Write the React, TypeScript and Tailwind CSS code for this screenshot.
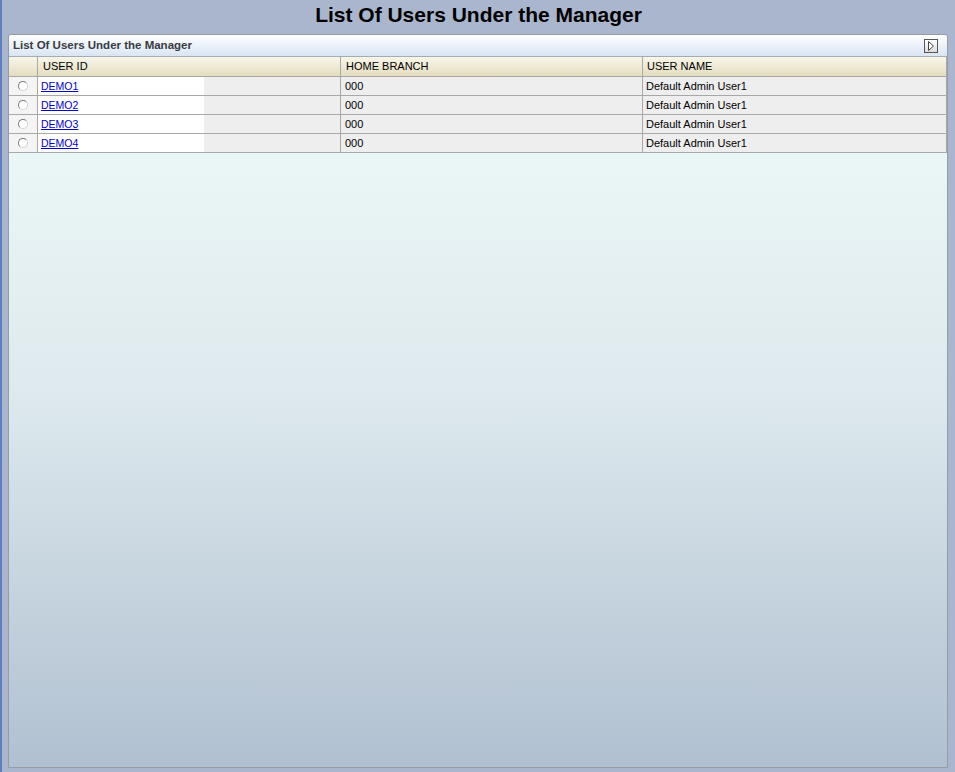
const rows = [
  { id: 'DEMO1', branch: '000', name: 'Default Admin User1' },
  { id: 'DEMO2', branch: '000', name: 'Default Admin User1' },
  { id: 'DEMO3', branch: '000', name: 'Default Admin User1' },
  { id: 'DEMO4', branch: '000', name: 'Default Admin User1' },
];

const font = 'font-["Tahoma","Liberation_Sans",sans-serif]';

function Radio() {
  return (
    <span className="block h-[10px] w-[10px] rounded-full border border-t-[#7a7a7a] border-l-[#7a7a7a] border-r-[#d0d0d0] border-b-[#d0d0d0] bg-white" />
  );
}

function ExpandIcon() {
  return (
    <button className="flex h-[14px] w-[14px] items-center justify-center border border-[#555] bg-gradient-to-b from-white to-[#dcdcdc]">
      <svg width="8" height="10" viewBox="0 0 8 10">
        <path d="M1.5 0.5 L6.5 5 L1.5 9.5 Z" fill="#fff" stroke="#444" strokeWidth="1" />
      </svg>
    </button>
  );
}

export default function App() {
  return (
    <div className={`flex h-[772px] flex-col border-l-2 border-[#5f7fc0] bg-[#a9b6cd] ${font}`}>
      <h1 className="h-[34px] pt-[1px] text-center text-[21px] font-bold leading-[28px] text-black">
        List Of Users Under the Manager
      </h1>

      <div className="mb-[4px] ml-[6px] mr-[7px] flex flex-1 flex-col overflow-hidden rounded-t-[3px] border border-[#959ca6]">
        {/* panel header */}
        <div className="flex h-[22px] items-center justify-between border-b border-[#a4abb3] bg-gradient-to-b from-white to-[#d9e5f3] pl-[4px] pr-[9px]">
          <span className="text-[11.5px] font-bold text-[#383c44]">List Of Users Under the Manager</span>
          <ExpandIcon />
        </div>

        {/* grid */}
        <div className="grid grid-cols-[29px_303px_302px_1fr] text-[11px] text-black">
          <div className="h-[20px] border-b border-r border-[#a8a8a8] bg-gradient-to-b from-[#f8f6ea] to-[#e4ddbf]" />
          <div className="h-[20px] border-b border-r border-[#a8a8a8] bg-gradient-to-b from-[#f8f6ea] to-[#e4ddbf] pl-[5px] leading-[19px]">
            USER ID
          </div>
          <div className="h-[20px] border-b border-r border-[#a8a8a8] bg-gradient-to-b from-[#f8f6ea] to-[#e4ddbf] pl-[5px] leading-[19px]">
            HOME BRANCH
          </div>
          <div className="h-[20px] border-b border-r border-[#a8a8a8] bg-gradient-to-b from-[#f8f6ea] to-[#e4ddbf] pl-[4px] leading-[19px]">
            USER NAME
          </div>

          {rows.map((r) => (
            <div key={r.id} className="contents">
              <div className="flex h-[19px] items-center border-b border-r border-[#a8a8a8] bg-[#f4f4f4] pl-[9px]">
                <Radio />
              </div>
              <div className="flex h-[19px] border-b border-r border-[#a8a8a8] bg-[#eeeeee]">
                <div className="w-[166px] bg-white pl-[3px] leading-[18px]">
                  <a href="#" className="text-[10.5px] text-[#0000cc] underline">
                    {r.id}
                  </a>
                </div>
              </div>
              <div className="h-[19px] border-b border-r border-[#a8a8a8] bg-[#eeeeee] pl-[4px] leading-[18px]">
                {r.branch}
              </div>
              <div className="h-[19px] border-b border-r border-[#a8a8a8] bg-[#eeeeee] pl-[3px] leading-[18px]">
                {r.name}
              </div>
            </div>
          ))}
        </div>

        {/* empty body */}
        <div className="flex-1 bg-gradient-to-b from-[#ebf6f6] via-[#dde9ed] via-40% to-[#b1c0d1]" />
      </div>
    </div>
  );
}
